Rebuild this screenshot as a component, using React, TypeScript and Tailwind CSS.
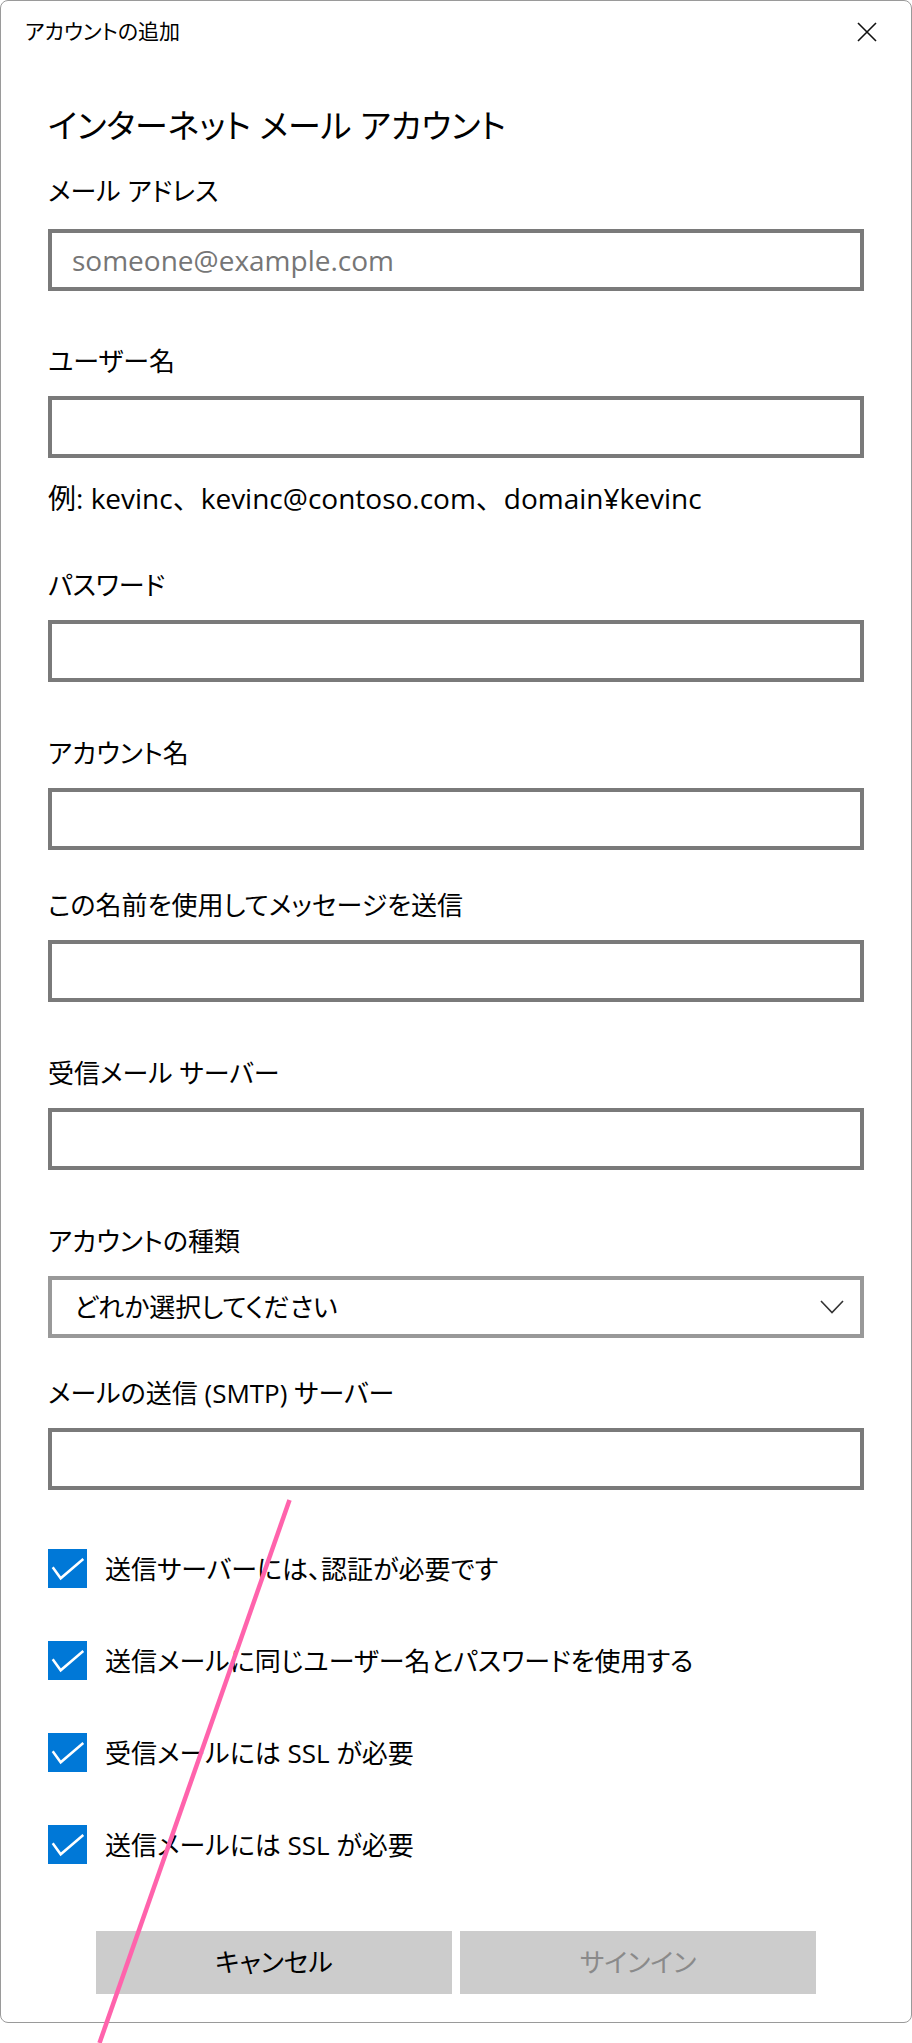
import { useState } from "react";

const font = "font-['Open_Sans','Noto_Sans_CJK_JP',sans-serif] [font-feature-settings:'palt']";

function Label({ children, className = "" }: { children: React.ReactNode; className?: string }) {
  return <div className={`h-[36px] leading-[36px] text-[26px] text-black ${className}`}>{children}</div>;
}

function TextBox({ placeholder = "", type = "text" }: { placeholder?: string; type?: string }) {
  return (
    <input
      type={type}
      placeholder={placeholder}
      className={`block w-full h-[62px] border-4 border-[#7a7a7a] bg-white pl-[20px] pr-4 text-[28px] text-black outline-none placeholder:text-[#767676] ${font}`}
    />
  );
}

function Check({ label, checked, onToggle, className = "" }: { label: string; checked: boolean; onToggle: () => void; className?: string }) {
  return (
    <button type="button" onClick={onToggle} className={`flex items-center gap-[18px] text-left ${className}`}>
      <span className={`w-[39px] h-[39px] flex-none ${checked ? "bg-[#0078d7]" : "border-2 border-black bg-white"}`}>
        {checked && (
          <svg width="39" height="39" viewBox="0 0 39 39" fill="none">
            <path d="M4.7 18.3 L12.7 29.3 L35.3 10" stroke="white" strokeWidth="2.5" strokeLinejoin="miter" />
          </svg>
        )}
      </span>
      <span className="text-[26px] leading-[36px] text-black">{label}</span>
    </button>
  );
}

export default function App() {
  const [checks, setChecks] = useState([true, true, true, true]);
  const toggle = (i: number) => setChecks((c) => c.map((v, j) => (j === i ? !v : v)));

  const checkLabels = [
    "送信サーバーには、認証が必要です",
    "送信メールに同じユーザー名とパスワードを使用する",
    "受信メールには SSL が必要",
    "送信メールには SSL が必要",
  ];

  return (
    <div className={`relative w-[912px] h-[2043px] bg-white overflow-hidden ${font}`}>
      {/* Dialog window */}
      <div className="w-[912px] border border-[#9a9a9a] rounded-[8px] bg-white pb-[28px]">
        {/* Title bar */}
        <div className="h-[62px] flex items-center justify-between pl-[24px] pr-[34px]">
          <span className="text-[21px] text-black">アカウントの追加</span>
          <svg width="20" height="20" viewBox="0 0 20 20" fill="none">
            <path d="M1 1 L19 19 M19 1 L1 19" stroke="#111" strokeWidth="1.6" />
          </svg>
        </div>

        <div className="px-[47px]">
          <h1 className="mt-[41px] h-[44px] leading-[44px] text-[33px] font-normal text-black">インターネット メール アカウント</h1>

          <Label className="mt-[25px] mb-[20px]">メール アドレス</Label>
          <TextBox placeholder="someone@example.com" />

          <Label className="mt-[52px] mb-[17px]">ユーザー名</Label>
          <TextBox />
          <div className="mt-[24px] h-[32px] leading-[32px] text-[28px] text-black [font-feature-settings:normal]">例: kevinc、kevinc@contoso.com、domain¥kevinc</div>

          <Label className="mt-[53px] mb-[17px]">パスワード</Label>
          <TextBox type="password" />

          <Label className="mt-[53px] mb-[17px]">アカウント名</Label>
          <TextBox />

          <Label className="mt-[37px] mb-[17px]">この名前を使用してメッセージを送信</Label>
          <TextBox />

          <Label className="mt-[53px] mb-[17px]">受信メール サーバー</Label>
          <TextBox />

          <Label className="mt-[53px] mb-[17px]">アカウントの種類</Label>
          <div className="h-[62px] border-4 border-[#999999] flex items-center justify-between pl-[22px] pr-[16px]">
            <span className="text-[26px] text-black">どれか選択してください</span>
            <svg width="24" height="14" viewBox="0 0 24 14" fill="none">
              <path d="M1 1 L12 12.5 L23 1" stroke="#333" strokeWidth="1.6" />
            </svg>
          </div>

          <Label className="mt-[37px] mb-[17px]">メールの送信 (SMTP) サーバー</Label>
          <TextBox />

          <div className="mt-[59px] flex flex-col gap-[53px]">
            {checkLabels.map((l, i) => (
              <Check key={l} label={l} checked={checks[i]} onToggle={() => toggle(i)} />
            ))}
          </div>

          <div className="mt-[67px] flex justify-center gap-[8px]">
            <button type="button" className="w-[356px] h-[63px] bg-[#cccccc] text-[26px] text-black">キャンセル</button>
            <button type="button" className="w-[356px] h-[63px] bg-[#cccccc] text-[26px] text-[#8a8a8a]">サインイン</button>
          </div>
        </div>
      </div>

      {/* Annotation stroke over the dialog */}
      <svg className="absolute left-0 top-0 pointer-events-none" width="912" height="2043" viewBox="0 0 912 2043">
        <line x1="289.5" y1="1500" x2="99.5" y2="2043" stroke="#ff63ac" strokeWidth="4.5" />
      </svg>
    </div>
  );
}
